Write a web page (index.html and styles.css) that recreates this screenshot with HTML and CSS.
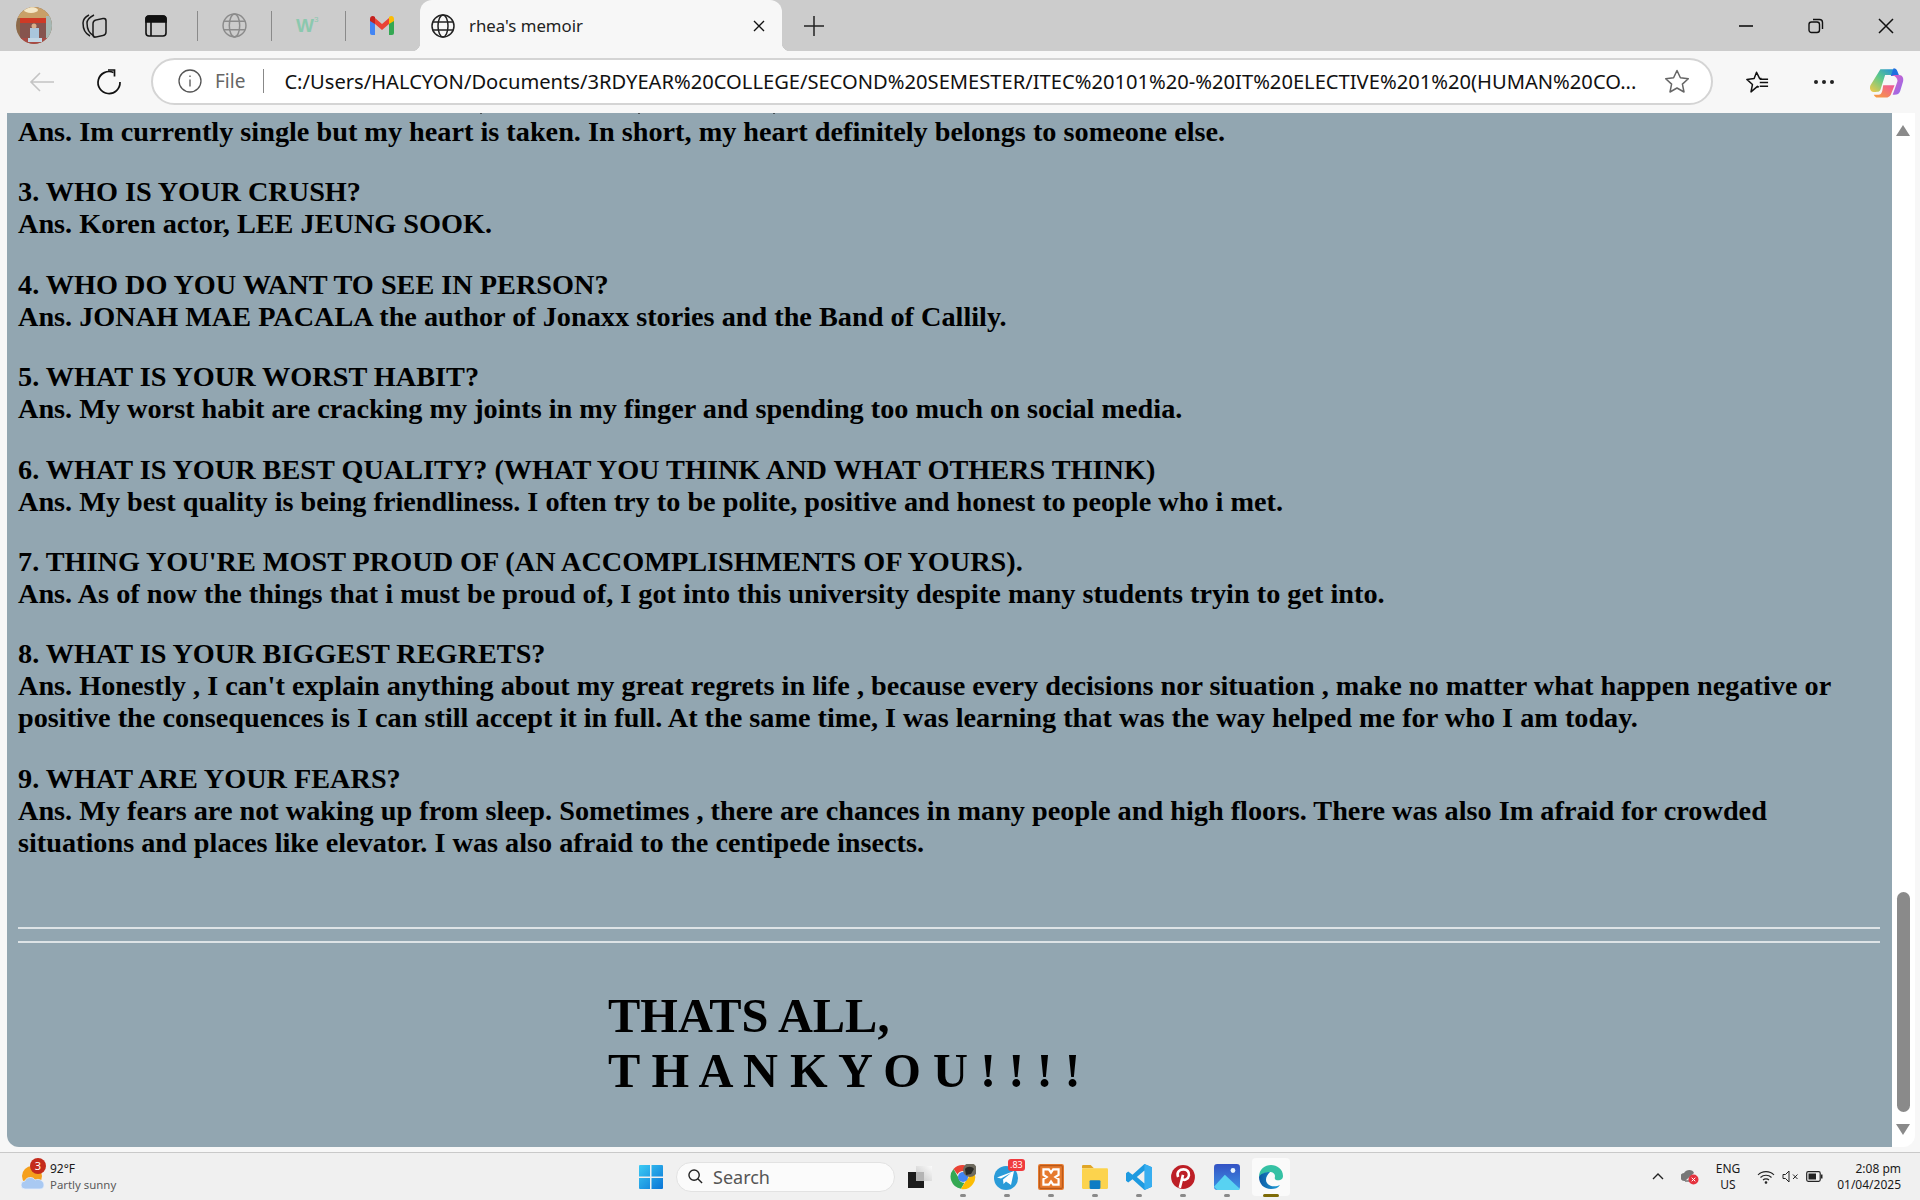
FILE: index.html
```html
<!DOCTYPE html>
<html lang="en">
<head>
    <meta charset="UTF-8">
    <title>rhea's memoir</title>
    <link rel="stylesheet" href="styles.css">
</head>
<body>

<div class="tabstrip">
    <svg class="ic profile" viewBox="0 0 36 37">
        <defs><clipPath id="round"><ellipse cx="18" cy="18.5" rx="18" ry="18.5"/></clipPath></defs>
        <g clip-path="url(#round)">
            <rect width="36" height="37" fill="#8d6a4a"/>
            <rect width="36" height="11" fill="#c9a068"/>
            <ellipse cx="15" cy="3" rx="7" ry="3" fill="#f4e7c8"/>
            <rect x="4" y="11" width="26" height="5" fill="#cf3a26"/>
            <rect x="4" y="16" width="26" height="16" fill="#86544e"/>
            <rect x="30" y="9" width="6" height="23" fill="#a7b8b4"/>
            <rect x="14" y="21" width="9" height="12" fill="#a9c6dc"/>
            <circle cx="18" cy="19" r="2.500" fill="#d9b08c"/>
            <rect y="31" width="36" height="6" fill="#a84a44"/>
            <rect x="12" y="31" width="14" height="4" fill="#c2d6e4"/>
        </g>
    </svg>
    <svg class="ic collections" viewBox="0 0 26 26" fill="none" stroke="#1a1a1a" stroke-width="1.5">
        <path d="M8 23C4 21 1 16 1 10 1 6 3 4 7 2"/>
        <path d="M12 23C8 21 5 16 5 10 5 6 8 4 12 2"/>
        <rect x="11" y="6" width="13" height="17" rx="3" transform="skewY(-12) translate(0 4)"/>
    </svg>
    <svg class="ic sidebar" viewBox="0 0 22 22" fill="none" stroke="#111" stroke-width="1.6">
        <rect x="1" y="1" width="20" height="20" rx="3"/>
        <path d="M1 4a3 3 0 0 1 3-3h14a3 3 0 0 1 3 3v3H1z" fill="#111"/>
        <path d="M6 7v14"/>
    </svg>
    <span class="sep sep-first"></span>
    <svg class="ic globe pinned" viewBox="0 0 24 24" fill="none" stroke="#8b8b8b" stroke-width="1.4">
        <circle cx="12" cy="12" r="11"/><ellipse cx="12" cy="12" rx="5" ry="11"/><path d="M2 8h20M2 16h20"/>
    </svg>
    <span class="sep"></span>
    <span class="w3">W<sup>3</sup></span>
    <span class="sep"></span>
    <svg class="ic gmail" viewBox="0 0 24 19">
        <path d="M0 4v13a2 2 0 0 0 2 2h3V7z" fill="#4285f4"/>
        <path d="M24 4v13a2 2 0 0 1-2 2h-3V7z" fill="#34a853"/>
        <path d="M5 8V2L12 8 19 2v6l-7 6z" fill="#ea4335"/>
        <path d="M0 5V3C0 0 3-.8 5 1v7z" fill="#c5221f"/>
        <path d="M24 5V3c0-3-3-3.800-5-2v7z" fill="#fbbc04"/>
    </svg>
    <div class="tab">
        <svg class="ic tabglobe" viewBox="0 0 24 24" fill="none" stroke="#222" stroke-width="1.5">
            <circle cx="12" cy="12" r="11"/><ellipse cx="12" cy="12" rx="5" ry="11"/><path d="M2 8h20M2 16h20"/>
        </svg>
        <span class="tabtitle">rhea's memoir</span>
        <svg class="ic tabclose" viewBox="0 0 12 12" fill="none" stroke="#111" stroke-width="1.4"><path d="M1 1l10 10M11 1L1 11"/></svg>
    </div>
    <svg class="ic newtab" viewBox="0 0 20 20" fill="none" stroke="#222" stroke-width="1.5"><path d="M10 0v20M0 10h20"/></svg>
    <div class="winctl">
        <svg class="ic" viewBox="0 0 16 16" fill="none" stroke="#111" stroke-width="1.6"><path d="M1 8h14"/></svg>
        <svg class="ic" viewBox="0 0 16 16" fill="none" stroke="#111" stroke-width="1.4"><rect x="1" y="4" width="10.500" height="10.500" rx="2.500"/><path d="M5 1.500h6.500a3 3 0 0 1 3 3V11"/></svg>
        <svg class="ic" viewBox="0 0 16 16" fill="none" stroke="#111" stroke-width="1.5"><path d="M1 1l14 14M15 1L1 15"/></svg>
    </div>
</div>

<div class="toolbar">
    <svg class="ic back" viewBox="0 0 26 22" fill="none" stroke="#c4c4c4" stroke-width="1.6"><path d="M25 11H2M11 2l-9 9 9 9"/></svg>
    <svg class="ic refresh" viewBox="0 0 26 26" fill="none" stroke="#111" stroke-width="1.7"><path d="M17.500 3.500A11 11 0 1 0 24 13"/><path d="M12 1h6.500v6.500" /></svg>
    <div class="omnibox">
        <svg class="ic info" viewBox="0 0 24 24" fill="none" stroke="#555" stroke-width="1.3"><circle cx="12" cy="12" r="11"/><path d="M12 10.500v7M12 6.500v1.600"/></svg>
        <span class="filelabel">File</span>
        <span class="omnisep"></span>
        <span class="url">C:/Users/HALCYON/Documents/3RDYEAR%20COLLEGE/SECOND%20SEMESTER/ITEC%20101%20-%20IT%20ELECTIVE%201%20(HUMAN%20CO...</span>
        <svg class="ic star" viewBox="0 0 26 25" fill="none" stroke="#666" stroke-width="1.500"><path d="M13 1.500l3.400 7.300 7.900.9-5.900 5.400 1.600 7.900-7-4-7 4 1.600-7.900L1.700 9.700l7.900-.9z" stroke-linejoin="round"/></svg>
    </div>
    <svg class="ic favs" viewBox="0 0 26 25" fill="none" stroke="#111" stroke-width="1.600"><path d="M15 18l-1.500-.8-7 6 1.600-8L2 9.700l7.900-.9L12.500 2l3.400 6.800h2M16 13h9M16 9.500h9M16 17h9" stroke-linejoin="round"/></svg>
    <div class="dots"><i></i><i></i><i></i></div>
    <svg class="ic copilot" viewBox="0 0 36 32">
        <defs>
            <linearGradient id="cpa" x1="0" y1="1" x2="1" y2="0"><stop offset="0" stop-color="#f7c948"/><stop offset=".5" stop-color="#5cc98a"/><stop offset="1" stop-color="#1e88e5"/></linearGradient>
            <linearGradient id="cpb" x1="0" y1="0" x2="1" y2="1"><stop offset="0" stop-color="#e35fc0"/><stop offset="1" stop-color="#8a6cf0"/></linearGradient>
            <linearGradient id="cpc" x1="0" y1="1" x2="1" y2="0"><stop offset="0" stop-color="#f7a13b"/><stop offset="1" stop-color="#f0569a"/></linearGradient>
        </defs>
        <path d="M11 2h14l4 6H16l-5 16c-1 2-3 2-5 2H4C1 26-1 23 .5 19z" fill="url(#cpa)"/>
        <path d="M25 1c2 0 3 1 4 3l2 5h-9z" fill="#1f6fe0"/>
        <path d="M22 8h9c3 0 5 3 4 7l-3 10c-1 3-3 4-6 4h-2l5-14c1-3-3-7-7-7z" fill="url(#cpb)"/>
        <path d="M14 19h12l-4 10c-1 2-3 3-5 3H8c-2 0-3-1-4-3h5c2 0 3-1 4-4z" fill="url(#cpc)"/>
    </svg>
</div>

<div class="viewport">
    <div class="page">
        <div class="ticks"><i></i><i></i><i></i></div>
        <p class="first">Ans. Im currently single but my heart is taken. In short, my heart definitely belongs to someone else.</p>
        <p>3. WHO IS YOUR CRUSH?<br>
        Ans. Koren actor, LEE JEUNG SOOK.</p>
        <p>4. WHO DO YOU WANT TO SEE IN PERSON?<br>
        Ans. JONAH MAE PACALA the author of Jonaxx stories and the Band of Callily.</p>
        <p>5. WHAT IS YOUR WORST HABIT?<br>
        Ans. My worst habit are cracking my joints in my finger and spending too much on social media.</p>
        <p>6. WHAT IS YOUR BEST QUALITY? (WHAT YOU THINK AND WHAT OTHERS THINK)<br>
        Ans. My best quality is being friendliness. I often try to be polite, positive and honest to people who i met.</p>
        <p>7. THING YOU'RE MOST PROUD OF (AN ACCOMPLISHMENTS OF YOURS).<br>
        Ans. As of now the things that i must be proud of, I got into this university despite many students tryin to get into.</p>
        <p>8. WHAT IS YOUR BIGGEST REGRETS?<br>
        Ans. Honestly , I can't explain anything about my great regrets in life , because every decisions nor situation , make no matter what happen negative or positive the consequences is I can still accept it in full. At the same time, I was learning that was the way helped me for who I am today.</p>
        <p>9. WHAT ARE YOUR FEARS?<br>
        Ans. My fears are not waking up from sleep. Sometimes , there are chances in many people and high floors. There was also Im afraid for crowded situations and places like elevator. I was also afraid to the centipede insects.</p>
        <hr class="rule-one">
        <hr class="rule-two">
        <h1>THATS ALL,<br>T H A N K Y O U ! ! ! !</h1>
    </div>
    <div class="scrollbar">
        <span class="arrow up"></span>
        <span class="thumb"></span>
        <span class="arrow down"></span>
    </div>
</div>

<div class="taskbar">
    <div class="weather">
        <svg class="ic sun" viewBox="0 0 24 26">
            <circle cx="11" cy="11" r="10" fill="#f59f1c"/>
            <path d="M4 24a4 4 0 0 1 0-8c1-4 8-5 10-1 4-2 9 1 9 5 0 3-2 4-4 4z" fill="#a9c9f2" stroke="#e6eefb" stroke-width=".8"/>
        </svg>
        <span class="badge">3</span>
        <div class="weathertext">
            <span class="temp">92°F</span>
            <span class="cond">Partly sunny</span>
        </div>
    </div>

    <svg class="ic winlogo" viewBox="0 0 24 24">
        <defs><linearGradient id="win" x1="0" y1="0" x2="1" y2="1"><stop offset="0" stop-color="#3ccbf4"/><stop offset="1" stop-color="#0a74d6"/></linearGradient></defs>
        <path d="M0 1a1 1 0 0 1 1-1h10v11.500H0zM12.500 0H23a1 1 0 0 1 1 1v10.500H12.500zM0 13h11v11H1a1 1 0 0 1-1-1zM12.500 13H24v10a1 1 0 0 1-1 1H12.500z" fill="url(#win)"/>
    </svg>
    <div class="search">
        <svg class="ic" viewBox="0 0 16 16" fill="none" stroke="#222" stroke-width="1.500"><circle cx="6.500" cy="6.500" r="5.500"/><path d="M10.500 10.500L15 15"/></svg>
        <span>Search</span>
    </div>
    <svg class="ic taskview" viewBox="0 0 24 22">
        <defs><linearGradient id="tv" x1="1" y1="0" x2="0" y2="1"><stop offset="0" stop-color="#fbfbfb"/><stop offset="1" stop-color="#c4c4c4"/></linearGradient></defs>
        <rect x="8" width="16" height="15" fill="url(#tv)"/>
        <rect y="6" width="16" height="16" fill="#1c1c1c"/>
        <rect x="8" y="6" width="8" height="9" fill="#b4b4b4"/>
    </svg>

    <div class="apps">
        <div class="app">
            <svg class="ic" viewBox="0 0 26 26">
                <path d="M13 1a12 12 0 0 1 10.400 6H13a6 6 0 0 0-5.500 3.500L3.500 5A12 12 0 0 1 13 1z" fill="#ea4335"/>
                <path d="M3.500 5l5 8.700a6 6 0 0 0 6 5l-3.500 6A12 12 0 0 1 3.500 5z" fill="#34a853"/>
                <path d="M23.400 7A12 12 0 0 1 11 25l5.200-8.800A6 6 0 0 0 17.500 7z" fill="#fbbc04"/>
                <circle cx="13" cy="13" r="5" fill="#4285f4"/>
                <circle cx="20" cy="6" r="7" fill="#6e6a5e"/>
                <path d="M15 5c2-3 7-3 9 0l-3 5-5 1z" fill="#2a2a26"/>
            </svg>
        </div>
        <div class="app">
            <svg class="ic" viewBox="0 0 26 26">
                <circle cx="12" cy="14" r="12" fill="#2a9bd8"/>
                <path d="M3 13.500L20 7l-3 14-5-3.500-2.500 2.500-.5-4.500 8-6.500-10 5.500z" fill="#fff"/>
            </svg>
            <span class="tgcount">.83</span>
        </div>
        <div class="app">
            <svg class="ic" viewBox="0 0 24 24">
                <rect width="24" height="24" rx="2" fill="#e67a2e"/>
                <rect x="1.500" y="1.500" width="21" height="21" rx="1" fill="none" stroke="#b9581a"/>
                <path d="M5 5h5l2 3 2-3h5v5l-3 2 3 2v5h-5l-2-3-2 3H5v-5l3-2-3-2z" fill="none" stroke="#fff" stroke-width="2"/>
            </svg>
        </div>
        <div class="app">
            <svg class="ic" viewBox="0 0 24 24">
                <path d="M0 2a1 1 0 0 1 1-1h7l3 3h-11z" fill="#e0a526"/>
                <rect y="4" width="24" height="19" rx="1" fill="#fcd34d"/>
                <rect x="7" y="15" width="10" height="8" rx="1" fill="#0f7cc4"/>
            </svg>
        </div>
        <div class="app">
            <svg class="ic" viewBox="0 0 24 24">
                <path d="M17 0l7 3v18l-7 3L6 14l-4 3-2-1.500V8.500L2 7l4 3z" fill="#1e9ae0"/>
                <path d="M17 0v24l7-3V3z" fill="#37aef0"/>
                <path d="M17 6l-7 6 7 6z" fill="#f0f0f0"/>
            </svg>
        </div>
        <div class="app">
            <svg class="ic" viewBox="0 0 24 24">
                <circle cx="12" cy="12" r="11" fill="#bd1f26"/>
                <path d="M9 22l3-12M7.500 12c-2-5 2-7 5-7s5.500 2 5 5.500-4.500 5.500-6.500 3" fill="none" stroke="#fff" stroke-width="2.400"/>
            </svg>
        </div>
        <div class="app">
            <svg class="ic" viewBox="0 0 24 24">
                <defs><linearGradient id="photos" x1="0" y1="0" x2="0" y2="1"><stop offset="0" stop-color="#3452c4"/><stop offset="1" stop-color="#3c93e4"/></linearGradient></defs>
                <rect width="24" height="24" rx="3" fill="url(#photos)"/>
                <circle cx="17.500" cy="6" r="2.200" fill="#e8f4fd"/>
                <path d="M0 21l10-11 14 13-1 1H3z" fill="#58d2f2"/>
            </svg>
        </div>
        <div class="app current">
            <svg class="ic" viewBox="0 0 26 26">
                <defs><linearGradient id="edge" x1="0" y1="0" x2="1" y2="0"><stop offset="0" stop-color="#0c59a4"/><stop offset="1" stop-color="#1fa0d8"/></linearGradient></defs>
                <path d="M1 13C1 5 7 1 13 1s12 4 12 11c0 4-4 5-7 4-2-1-1-3-1-4 0-2-2-4-5-4-5 0-8 3-11 5z" fill="#35c1a4"/>
                <path d="M1 13c0 7 5 12 12 12 4 0 7-1 9-4-4 2-10 2-13-2-2-3-1-7 3-11C7 8 2 10 1 13z" fill="url(#edge)"/>
            </svg>
        </div>
    </div>

    <div class="tray">
        <svg class="ic caret" viewBox="0 0 12 7" fill="none" stroke="#222" stroke-width="1.400"><path d="M1 6l5-5 5 5"/></svg>
        <svg class="ic cloud" viewBox="0 0 18 17">
            <path d="M4 13a4 4 0 0 1-1-8c2-4 9-4 10 0" fill="#777"/>
            <path d="M4 13h6" stroke="#777" stroke-width="1.500"/>
            <circle cx="12.500" cy="11.500" r="5" fill="#e5323e"/>
            <path d="M10.700 9.700l3.600 3.600M14.300 9.700l-3.600 3.600" stroke="#fff"/>
        </svg>
        <div class="lang"><span>ENG</span><span>US</span></div>
        <svg class="ic wifi" viewBox="0 0 18 14" fill="none" stroke="#222" stroke-width="1.100"><path d="M1 5c4-4.500 12-4.500 16 0M3.500 7.500c3-3 8-3 11 0M6 10c1.500-1.500 4.500-1.500 6 0"/><circle cx="9" cy="12.500" r=".8" fill="#222"/></svg>
        <svg class="ic mute" viewBox="0 0 17 13" fill="none" stroke="#222"><path d="M1 4.500h2.500L7 1v11L3.500 8.500H1zM11 4.500l4.500 4.500M15.500 4.500L11 9"/></svg>
        <svg class="ic battery" viewBox="0 0 17 11"><rect x=".7" y=".7" width="13.500" height="9.600" rx="1.500" fill="none" stroke="#222" stroke-width="1.200"/><rect x="2.500" y="2.500" width="7.500" height="6" fill="#222"/><rect x="15" y="3.500" width="1.500" height="4" fill="#222"/></svg>
        <div class="clock"><span>2:08 pm</span><span>01/04/2025</span></div>
    </div>
</div>

</body>
</html>
```

FILE: styles.css
```css
*{
box-sizing:border-box;
}

html,body{
margin:0;
height:100%;
overflow:hidden;
}

body{
display:flex;
flex-direction:column;
height:1200px;
background-color:#f7f7f7;
font-family:"Noto Sans","Open Sans",sans-serif;
color:#1a1a1a;
}

.ic{
display:block;
flex:none;
}

/* tab strip */

.tabstrip{
display:flex;
align-items:center;
height:51px;
flex:none;
background-color:#cccccc;
padding-left:16px;
}

.profile{width:36px;height:37px;}
.collections{width:26px;height:26px;margin-left:30px;}
.sidebar{width:22px;height:22px;margin-left:37px;}

.sep{
width:1px;
height:30px;
background-color:#8a8a8a;
margin:0 24px 0 0;
}

.sep-first{margin-left:30px;}

.globe{width:25px;height:25px;margin-right:24px;}

.w3{
width:26px;
margin-right:23px;
font-family:"Liberation Sans",sans-serif;
font-weight:bold;
font-size:19px;
line-height:26px;
color:#8bc8ae;
white-space:nowrap;
}

.w3 sup{
font-size:8px;
font-weight:normal;
vertical-align:top;
line-height:14px;
}

.gmail{width:24px;height:19px;margin-right:24px;}

.tab{
position:relative;
display:flex;
align-items:center;
height:51px;
width:362px;
margin-left:2px;
padding:0 17px 0 11px;
background-color:#f7f7f7;
border-radius:12px 12px 0 0;
}

/* little flares at the foot of the active tab */
.tab::before,.tab::after{
content:"";
position:absolute;
bottom:0;
width:8px;
height:8px;
}

.tab::before{
left:-8px;
background:radial-gradient(circle at 0 0,#cccccc 8px,#f7f7f7 8.500px);
}

.tab::after{
right:-8px;
background:radial-gradient(circle at 100% 0,#cccccc 8px,#f7f7f7 8.500px);
}

.tabglobe{width:24px;height:24px;}

.tabtitle{
margin-left:14px;
font-size:16.800px;
color:#222;
}

.tabclose{width:12px;height:12px;margin-left:auto;}

.newtab{width:20px;height:20px;margin-left:22px;}

.winctl{
display:flex;
margin-left:auto;
gap:54px;
padding-right:26px;
}

.winctl .ic{width:16px;height:16px;}

/* address bar */

.toolbar{
display:flex;
align-items:center;
height:62px;
flex:none;
background-color:#f7f7f7;
padding-left:29px;
}

.back{width:26px;height:22px;}
.refresh{width:26px;height:26px;margin-left:41px;}

.omnibox{
display:flex;
align-items:center;
width:1562px;
height:47px;
margin:0 0 2px 29px;
padding:0 21px 0 25px;
background-color:#fff;
border:2px solid #d4d4d4;
border-radius:24px;
}

.info{width:24px;height:24px;}

.filelabel{
margin-left:13px;
font-size:19px;
color:#666;
}

.omnisep{
width:1px;
height:24px;
margin-left:18px;
background-color:#888;
}

.url{
margin-left:20px;
font-size:20.150px;
color:#111;
white-space:nowrap;
}

.star{width:26px;height:25px;margin-left:auto;}

.favs{width:24px;height:24px;margin-left:32px;}

.dots{
display:flex;
gap:4px;
margin-left:45px;
}

.dots i{
width:4px;
height:4px;
border-radius:50%;
background-color:#222;
}

.copilot{width:34px;height:31px;margin-left:36px;}

/* the page itself */

.viewport{
display:flex;
height:1034px;
flex:none;
padding-left:7px;
}

.page{
flex:1;
overflow:hidden;
padding:0 12px 0 11px;
background-color:#92a6b1;
border-radius:0 0 0 12px;
font-family:"Liberation Serif","Times New Roman",serif;
font-weight:bold;
font-size:28.250px;
color:#000;
}

.page p{
margin:28.400px 0;
}

.page .first{
margin-top:2px;
}

/* bottoms of the line scrolled out of view */
.ticks{
display:flex;
height:1px;
}

.ticks i{
width:2px;
background-color:#4a5358;
margin-left:156px;
}

.ticks i:first-child{
margin-left:462px;
}

.ticks i:last-child{
margin-left:133px;
}

.page hr{
height:2px;
border:none;
background-color:#dde3e6;
}

.rule-one{margin:68px 0 0;}
.rule-two{margin:12px 0 0;}

.page h1{
margin:45px 0 0 590px;
font-size:48.400px;
line-height:55px;
}

.scrollbar{
position:relative;
width:23px;
margin-right:5px;
background-color:#fff;
border-radius:0 0 12px 0;
}

.thumb{
position:absolute;
left:5px;
right:5px;
top:779px;
height:220px;
border-radius:7px;
background-color:#8a8a8a;
}

.arrow{
position:absolute;
left:4px;
width:0;
height:0;
border-left:7.500px solid transparent;
border-right:7.500px solid transparent;
}

.up{top:12px;border-bottom:11px solid #8a8a8a;}
.down{top:1011px;border-top:11px solid #8a8a8a;}

/* windows taskbar */

.taskbar{
display:flex;
align-items:center;
height:48px;
flex:none;
margin-top:5px;
background-color:#f0f0f0;
border-top:1px solid #c9c9c9;
padding-left:21px;
}

.weather{
position:relative;
display:flex;
align-items:center;
width:618px;
}

.sun{width:24px;height:26px;margin-top:2px;}

.badge{
position:absolute;
left:9px;
top:-3px;
width:16px;
height:16px;
border-radius:50%;
background-color:#c42b1c;
color:#fff;
font-size:11px;
line-height:16px;
text-align:center;
}

.weathertext{
display:flex;
flex-direction:column;
margin-left:5px;
font-size:12px;
line-height:16px;
}

.cond{
color:#5a5a5a;
font-size:11.400px;
}

.winlogo{width:24px;height:24px;}

.search{
display:flex;
align-items:center;
width:219px;
height:30px;
margin-left:13px;
padding-left:11px;
background-color:#fbfbfb;
border:1px solid #e2e2e2;
border-radius:15px;
font-size:18px;
color:#555;
}

.search .ic{width:15px;height:15px;}
.search span{margin-left:10px;}

.taskview{width:24px;height:22px;margin-left:13px;}

.apps{
display:flex;
margin-left:9px;
}

.app{
position:relative;
display:flex;
align-items:center;
justify-content:center;
width:44px;
height:38px;
}

.app .ic{width:26px;height:26px;}

.app::after{
content:"";
position:absolute;
left:19px;
bottom:-1px;
width:6px;
height:3px;
border-radius:2px;
background-color:#8a8a8a;
}

.current{
background-color:#fafafa;
border-radius:4px;
width:38px;
margin-left:3px;
}

.current::after{
left:11px;
width:16px;
background-color:#7d6a06;
}

.tgcount{
position:absolute;
left:23px;
top:1px;
padding:0 2px;
background-color:#f03a3e;
border-radius:3px;
color:#fff;
font-size:9px;
line-height:12px;
}

.tray{
display:flex;
align-items:center;
margin-left:auto;
padding-right:19px;
font-size:12px;
line-height:16px;
}

.caret{width:12px;height:7px;}
.cloud{width:18px;height:17px;margin-left:17px;}

.lang{
display:flex;
flex-direction:column;
align-items:center;
width:30px;
margin-left:14px;
}

.wifi{width:18px;height:14px;margin-left:14px;}
.mute{width:17px;height:13px;margin-left:7px;}
.battery{width:17px;height:11px;margin-left:7px;}

.clock{
display:flex;
flex-direction:column;
align-items:flex-end;
width:70px;
margin-left:8px;
}
```
